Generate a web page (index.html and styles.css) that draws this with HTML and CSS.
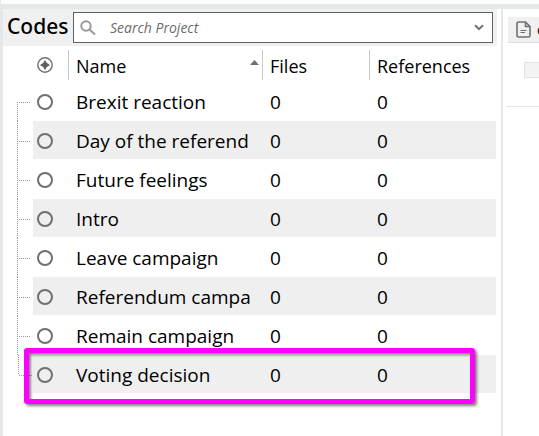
FILE: index.html
```html
<!DOCTYPE html>
<html lang="en">
<head>
<meta charset="utf-8">
<title>Codes</title>
<link rel="stylesheet" href="styles.css">
</head>
<body>
<div class="app">
  <div class="top-strip"></div>
  <div class="workspace">
    <main class="codes-panel">
      <form class="toolbar">
        <h1 class="title">Codes</h1>
        <div class="search">
          <svg class="search-icon" viewBox="0 0 16 16" aria-hidden="true"><circle cx="6" cy="6" r="4.7"/><path d="M9.5 9.5 15 14.6"/></svg>
          <input class="search-input" type="text" placeholder="Search Project" aria-label="Search Project">
          <button class="search-menu" type="button" aria-label="Search options"><svg viewBox="0 0 10 7" aria-hidden="true"><path d="M1 1.2 5 5.2 9 1.2"/></svg></button>
        </div>
      </form>
      <div class="table-wrap">
        <table class="codes">
          <colgroup><col class="col-tree"><col class="col-icon"><col class="col-name"><col class="col-files"><col></colgroup>
          <thead>
            <tr>
              <td></td>
              <td class="icon"><svg class="ring" viewBox="0 0 16 16" aria-hidden="true"><circle cx="8" cy="8" r="7.2" stroke-width="1.4"/><path class="star" d="M8 3 9.9 6.1 13 8 9.9 9.9 8 13 6.1 9.9 3 8 6.1 6.1Z"/></svg></td>
              <th><div class="head sorted">Name<svg class="sort" viewBox="0 0 9 5" aria-hidden="true"><path d="M0 5 4.5 0 9 5Z"/></svg></div></th>
              <th><div class="head">Files</div></th>
              <th><div class="head">References</div></th>
            </tr>
          </thead>
          <tbody>
            <tr><td class="tree"></td><td class="icon"><svg class="ring" viewBox="0 0 16 16"><circle cx="8" cy="8" r="7"/></svg></td><td>Brexit reaction</td><td>0</td><td>0</td></tr>
            <tr><td class="tree"></td><td class="icon"><svg class="ring" viewBox="0 0 16 16"><circle cx="8" cy="8" r="7"/></svg></td><td>Day of the referend</td><td>0</td><td>0</td></tr>
            <tr><td class="tree"></td><td class="icon"><svg class="ring" viewBox="0 0 16 16"><circle cx="8" cy="8" r="7"/></svg></td><td>Future feelings</td><td>0</td><td>0</td></tr>
            <tr><td class="tree"></td><td class="icon"><svg class="ring" viewBox="0 0 16 16"><circle cx="8" cy="8" r="7"/></svg></td><td>Intro</td><td>0</td><td>0</td></tr>
            <tr><td class="tree"></td><td class="icon"><svg class="ring" viewBox="0 0 16 16"><circle cx="8" cy="8" r="7"/></svg></td><td>Leave campaign</td><td>0</td><td>0</td></tr>
            <tr><td class="tree"></td><td class="icon"><svg class="ring" viewBox="0 0 16 16"><circle cx="8" cy="8" r="7"/></svg></td><td>Referendum campa</td><td>0</td><td>0</td></tr>
            <tr><td class="tree"></td><td class="icon"><svg class="ring" viewBox="0 0 16 16"><circle cx="8" cy="8" r="7"/></svg></td><td>Remain campaign</td><td>0</td><td>0</td></tr>
            <tr><td class="tree"></td><td class="icon"><svg class="ring" viewBox="0 0 16 16"><circle cx="8" cy="8" r="7"/></svg></td><td>Voting decision</td><td>0</td><td>0</td></tr>
          </tbody>
        </table>
        <div class="highlight"></div>
      </div>
    </main>
    <aside class="detail">
      <div class="tab"><svg viewBox="0 0 15 17" aria-hidden="true"><path d="M2.5 1H9.5L14 5.5V14.5Q14 16 12.5 16H2.5Q1 16 1 14.5V2.5Q1 1 2.5 1ZM9.5 1V5.5H14"/><path class="thin" d="M4.5 9.5H10.5M4.5 11.5H9"/></svg><span>c</span></div>
      <div class="detail-head"><div class="field"></div></div>
    </aside>
  </div>
</div>
</body>
</html>
```
FILE: styles.css
```css
* { box-sizing: border-box; }
body {
  margin: 0;
  background: #fff;
  color: #000;
  font-family: "Open Sans", "Noto Sans", sans-serif;
  overflow: hidden;
}
svg { display: block; fill: none; stroke: #707070; }
.app { display: flex; flex-direction: column; min-height: 100vh; }
.top-strip {
  height: 9px;
  background: #fbfdfc;
  border-bottom: 5px solid #e6e7e9;
  border-left: 1px solid #e6e7e9;
}
.workspace { flex: 1; display: flex; border-left: 3px solid #e6e7e9; }
.codes-panel { flex: 1; min-width: 0; padding-right: 4px; }
.toolbar {
  display: flex;
  align-items: flex-start;
  height: 37px;
  padding: 3px 4px;
  background: #f0f0f1;
}
.title { width: 66px; margin: 0; font-family: "Noto Sans", sans-serif; font-size: 21px; line-height: 28px; font-weight: 500; }
.search {
  flex: 1;
  display: flex;
  align-items: center;
  height: 31px;
  background: #fff;
  border: 1px solid #606060;
}
.search-icon { width: 16px; height: 16px; margin-left: 6px; stroke: #999; stroke-width: 2; }
.search-input {
  flex: 1;
  min-width: 0;
  margin-left: 14px;
  padding: 0;
  border: 0;
  outline: 0;
  background: none;
  font: italic 14px/20px "Open Sans", sans-serif;
}
.search-input::placeholder { color: #6c6c6c; opacity: 1; }
.search-menu { padding: 0 8px; border: 0; background: none; }
.search-menu svg { width: 10px; height: 7px; stroke-width: 2; }

.table-wrap { position: relative; margin-right: 1px; }
.codes { width: 100%; table-layout: fixed; border-collapse: collapse; }
.col-tree { width: 30px; }
.col-icon { width: 35px; }
.col-name { width: 194px; }
.col-files { width: 107px; }
.codes td, .codes th { padding: 0; text-align: left; font-weight: 400; white-space: nowrap; }
.codes thead td, .codes thead th { height: 36px; padding-top: 2px; font-size: 18px; }
.head { height: 30px; padding-left: 7px; line-height: 32px; border-left: 1px solid #c8c8c8; }
.sorted { display: flex; justify-content: space-between; }
.sort { width: 9px; height: 5px; margin: 10px 3px 0 0; fill: #707070; stroke: none; }
.codes tbody td { height: 39px; padding-left: 8px; font-size: 19px; line-height: 28px; }
.codes tbody tr:nth-child(even) td:not(.tree) { background: linear-gradient(#efefef, #efefef) top / 100% 38px no-repeat; }
.codes td.icon, .codes tbody td.icon { padding-left: 4px; }
.ring { width: 16px; height: 16px; stroke-width: 2; }
.star { fill: #606060; stroke: none; }
.codes tbody .tree {
  background:
    repeating-linear-gradient(90deg, #999 0 1px, transparent 1px 2px) 16px 20px / 12px 1px no-repeat,
    repeating-linear-gradient(#999 0 1px, transparent 1px 2px) 14px 0 / 1px 100% no-repeat;
}
.codes tbody tr:first-child .tree { background-position: 16px 20px, 14px 20px; }
.codes tbody tr:last-child .tree { background-size: 14px 1px, 1px 20px; background-position: 16px 20px, 15px 0; }
.highlight {
  position: absolute;
  left: 21px;
  right: 21px;
  bottom: -10px;
  height: 56px;
  border: 5px solid #f0f;
  border-radius: 3px;
  box-shadow: 2px 2px 3px rgba(0, 0, 0, .5), inset 2px 2px 3px rgba(0, 0, 0, .5);
}

.detail { width: 38px; padding-top: 8px; border-left: 2px solid #e6e7e9; overflow: hidden; }
.tab {
  display: flex;
  align-items: center;
  gap: 6px;
  height: 26px;
  margin-left: 5px;
  padding-left: 8px;
  background: #f0f0f0;
  border-bottom: 1px solid #dedede;
  font-size: 14px;
  line-height: 20px;
}
.tab svg { flex: none; width: 15px; height: 17px; stroke-width: 1.6; }
.tab .thin { stroke-width: 1.2; }
.detail-head { height: 64px; margin-left: 3px; padding: 19px 0 0 18px; border-bottom: 1px solid #e6e6e6; }
.field { height: 16px; background: #f3f3f3; border: 1px solid #e2e2e2; border-right: 0; }
```
